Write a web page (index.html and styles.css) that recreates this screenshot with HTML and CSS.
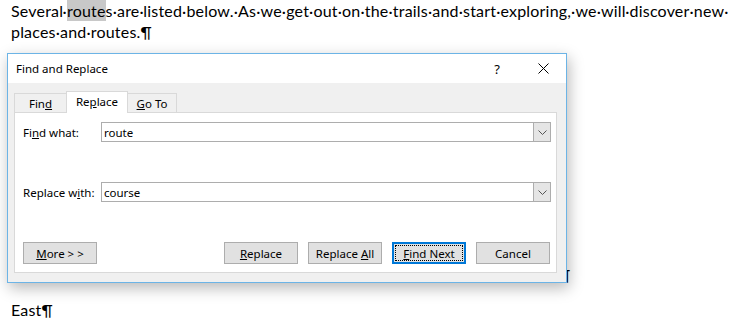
FILE: index.html
```html
<!DOCTYPE html>
<html lang="en">
  <head>
    <meta charset="UTF-8" />
    <title>Find and Replace</title>
    <link rel="stylesheet" href="styles.css">
  </head>
  <body>
    <div class="doc">
      <p class="intro">
        <span class="line">Several·<span class="hit">route</span>s·are·listed·below.·As·we·get·out·on·the·trails·and·start·exploring,·we·will·discover·new·</span>
        <span class="line">places·and·routes.¶</span>
      </p>
      <p class="hidden-line"><span class="mark">¶</span></p>
      <p class="east">East¶</p>
    </div>

    <div class="dialog">
      <div class="titlebar">
        <span class="title">Find and Replace</span>
        <span class="caption-btn help">?</span>
        <span class="caption-btn close">
          <svg width="11" height="11" viewBox="0 0 11 11">
            <path d="M0.5 0.5 L10.5 10.5 M10.5 0.5 L0.5 10.5" stroke="#000" stroke-width="1" fill="none" />
          </svg>
        </span>
      </div>
      <div class="dialog-body">
        <div class="tabs">
          <div class="tab tab-find">Fin<u>d</u></div>
          <div class="tab tab-replace active">Re<u>p</u>lace</div>
          <div class="tab tab-goto"><u>G</u>o To</div>
        </div>
        <div class="panel">
          <div class="field">
            <label>Fi<u>n</u>d what:</label>
            <div class="combo">
              <span class="combo-value">route</span>
              <span class="combo-arrow">
                <svg width="9" height="5" viewBox="0 0 9 5">
                  <path d="M0.5 0.5 L4.5 4.5 L8.5 0.5" stroke="#555" stroke-width="1" fill="none" />
                </svg>
              </span>
            </div>
          </div>
          <div class="field">
            <label>Replace w<u>i</u>th:</label>
            <div class="combo">
              <span class="combo-value">course</span>
              <span class="combo-arrow">
                <svg width="9" height="5" viewBox="0 0 9 5">
                  <path d="M0.5 0.5 L4.5 4.5 L8.5 0.5" stroke="#555" stroke-width="1" fill="none" />
                </svg>
              </span>
            </div>
          </div>
          <div class="buttons">
            <button class="btn"><u>M</u>ore &gt; &gt;</button>
            <span class="spacer"></span>
            <button class="btn"><u>R</u>eplace</button>
            <button class="btn">Replace <u>A</u>ll</button>
            <button class="btn default"><span class="focus"><u>F</u>ind Next</span></button>
            <button class="btn">Cancel</button>
          </div>
        </div>
      </div>
    </div>
  </body>
</html>
```

FILE: styles.css
```css
* {
  box-sizing: border-box;
}

body {
  margin: 0;
  background-color: #fff;
  color: #000;
}

/* document behind the dialog */
.doc {
  padding: 0 11px;
  font-family: 'Lato', 'Liberation Sans', sans-serif;
  font-size: 16px;
  letter-spacing: 0.19px;
  line-height: 21px;
}

.doc p {
  margin: 0;
}

.intro .line {
  display: block;
  white-space: nowrap;
}

.hit {
  background-color: #c8c8c8;
  padding: 2px 0 1px;
}

.hidden-line {
  height: 21px;
  margin-top: 222px !important;
}

.hidden-line .mark {
  display: inline-block;
  margin-left: 548px;
}

.east {
  margin-top: 14px !important;
}

/* dialog */
.dialog {
  position: absolute;
  left: 7px;
  top: 53px;
  width: 560px;
  height: 230px;
  border: 1px solid #6cb4e6;
  background-color: #f0f0f0;
  box-shadow: 2px 5px 14px rgba(0, 0, 0, 0.28);
  font-family: 'Noto Sans', 'Liberation Sans', sans-serif;
  font-size: 11.5px;
  display: flex;
  flex-direction: column;
}

.titlebar {
  height: 29px;
  background-color: #fff;
  display: flex;
  align-items: center;
}

.title {
  flex: 1;
  padding-left: 8px;
}

.caption-btn {
  width: 46px;
  height: 29px;
  display: flex;
  align-items: center;
  justify-content: center;
}

.help {
  font-size: 13px;
}

.dialog-body {
  flex: 1;
  padding: 8px 9px 9px 6px;
  display: flex;
  flex-direction: column;
}

.tabs {
  display: flex;
  align-items: flex-end;
  height: 21px;
}

.tab {
  height: 19px;
  border: 1px solid #d9d9d9;
  border-bottom: none;
  display: flex;
  align-items: center;
  justify-content: center;
  background-color: #f0f0f0;
}

.tab-find {
  width: 52px;
  border-right: none;
}

.tab-replace {
  width: 62px;
}

.tab-goto {
  width: 49px;
  border-left: none;
}

.tab.active {
  height: 22px;
  margin-bottom: -1px;
  background-color: #fff;
  position: relative;
  padding-bottom: 2px;
}

.panel {
  flex: 1;
  background-color: #fff;
  border: 1px solid #d9d9d9;
  padding: 9px 5px 8px 8px;
  display: flex;
  flex-direction: column;
  gap: 40px;
}

.field {
  display: flex;
  align-items: center;
  height: 20px;
}

.field label {
  width: 78px;
}

.combo {
  flex: 1;
  height: 20px;
  border: 1px solid #adadad;
  display: flex;
  align-items: center;
}

.combo-value {
  flex: 1;
  padding-left: 2px;
}

.combo-arrow {
  width: 17px;
  height: 18px;
  background-color: #e5e5e5;
  border-left: 1px solid #adadad;
  display: flex;
  align-items: center;
  justify-content: center;
}

.buttons {
  display: flex;
  gap: 10px;
  padding-right: 1px;
}

.spacer {
  flex: 1;
}

.btn {
  width: 74px;
  height: 22px;
  background-color: #e1e1e1;
  border: 1px solid #adadad;
  font-family: inherit;
  font-size: 11.5px;
  color: #000;
  padding: 0;
  margin: 0;
}

.btn.default {
  border: 2px solid #0078d7;
  padding: 1px;
}

.btn .focus {
  display: block;
  height: 100%;
  border: 1px dotted #000;
  line-height: 16px;
}
```
